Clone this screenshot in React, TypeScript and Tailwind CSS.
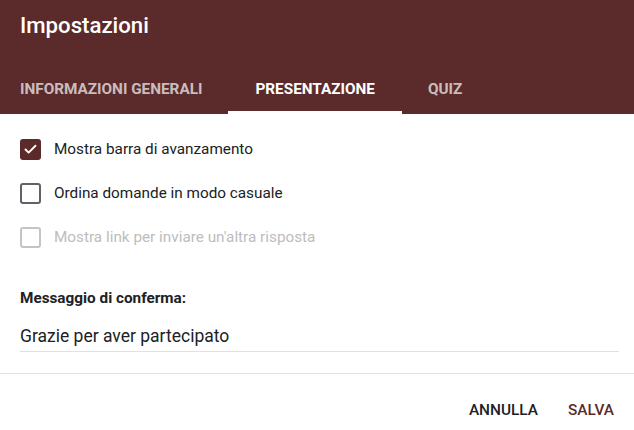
import { Check } from "lucide-react";

const tabs = [
	{ label: "INFORMAZIONI GENERALI", active: false, className: "pl-[20px] pr-[26px]" },
	{ label: "PRESENTAZIONE", active: true, className: "px-[27px]" },
	{ label: "QUIZ", active: false, className: "px-[26px]" },
];

const options = [
	{ label: "Mostra barra di avanzamento", checked: true, disabled: false },
	{ label: "Ordina domande in modo casuale", checked: false, disabled: false },
	{ label: "Mostra link per inviare un'altra risposta", checked: false, disabled: true },
];

function Checkbox({ checked, disabled }: { checked: boolean; disabled: boolean }) {
	if (checked) {
		return (
			<span className="flex h-[21px] w-[21px] shrink-0 items-center justify-center rounded-[3px] bg-[#5b2b2b]">
				<Check className="h-[15px] w-[15px] text-white" strokeWidth={3} />
			</span>
		);
	}
	return (
		<span
			className={`h-[21px] w-[21px] shrink-0 rounded-[3px] border-2 ${
				disabled ? "border-[#c4c4c4]" : "border-[#5f6368]"
			}`}
		/>
	);
}

export default function App() {
	return (
		<div className="h-[430px] w-[634px] overflow-hidden bg-white font-['Roboto',sans-serif]">
			{/* Header */}
			<div className="flex h-[114px] flex-col bg-[#5b2b2b]">
				<div className="h-[66px] px-[20px] pt-[11px]">
					<h1 className="text-[22.2px] leading-[28px] font-medium text-white">Impostazioni</h1>
				</div>
				<div className="flex h-[48px]">
					{tabs.map((tab) => (
						<div key={tab.label} className={`relative pt-[11px] ${tab.className}`}>
							<span
								className={`text-[15.3px] leading-[20px] font-bold ${
									tab.active ? "text-white" : "text-white/70"
								}`}
							>
								{tab.label}
							</span>
							{tab.active && (
								<div className="absolute bottom-0 left-0 h-[3px] w-full bg-white" />
							)}
						</div>
					))}
				</div>
			</div>

			{/* Options */}
			<div className="pt-[13px]">
				{options.map((opt) => (
					<div key={opt.label} className="flex h-[44px] items-center pl-[20px]">
						<Checkbox checked={opt.checked} disabled={opt.disabled} />
						<span
							className={`ml-[13px] text-[15.3px] leading-[20px] ${
								opt.disabled ? "text-[#bdbdbd]" : "text-[#202124]"
							}`}
						>
							{opt.label}
						</span>
					</div>
				))}
			</div>

			{/* Confirmation message */}
			<div className="mt-[29px] pl-[20px] pr-[15px]">
				<div className="text-[15.3px] leading-[20px] font-bold text-[#202124]">
					Messaggio di conferma:
				</div>
				<div className="mt-[16px] border-b border-[#e0e0e0] pb-[3px] text-[17.5px] leading-[24px] text-[#202124]">
					Grazie per aver partecipato
				</div>
			</div>

			<div className="mt-[21px] border-t border-[#e0e0e0]" />

			{/* Actions */}
			<div className="mt-[26px] flex justify-end gap-[30px] pr-[20px]">
				<button type="button" className="text-[15.4px] leading-[20px] font-medium text-[#202124]">
					ANNULLA
				</button>
				<button type="button" className="text-[15.4px] leading-[20px] font-medium text-[#5b2b2b]">
					SALVA
				</button>
			</div>
		</div>
	);
}
